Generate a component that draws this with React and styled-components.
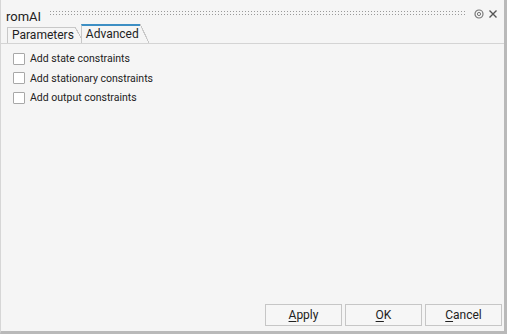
import React, { useState } from 'react';
import styled, { createGlobalStyle } from 'styled-components';

const GlobalStyle = createGlobalStyle`
  html, body { margin: 0; padding: 0; background: #f4f4f4; }
  body { font-family: Roboto, "Liberation Sans", sans-serif; }
`;

const Dialog = styled.div`
  width: 507px;
  height: 334px;
  box-sizing: border-box;
  display: flex;
  flex-direction: column;
  background: #f5f5f5;
  border-right: 3px solid #b9b9b9;
  border-bottom: 3px solid #b9b9b9;
  border-left: 1px solid #d6d6d6;
`;

const TitleBar = styled.div`
  height: 24px;
  box-sizing: border-box;
  display: flex;
  align-items: center;
  padding: 4px 6px 0 5px;
  gap: 8px;
`;

const Title = styled.span`
  font-size: 13px;
  color: #222;
  margin-top: 4px;
`;

const Grip = styled.div`
  flex: 1;
  height: 5px;
  margin-top: -3px;
  background-image: radial-gradient(circle, #9a9a9a 0.8px, transparent 1px);
  background-size: 3px 3px;
`;

const TitleIcons = styled.div`
  display: flex;
  align-items: center;
  gap: 4px;
`;

const TabBar = styled.div`
  display: flex;
  align-items: flex-end;
  padding-left: 6px;
  height: 19px;
  border-bottom: 1px solid #d4d4d4;
`;

const Tab = styled.div`
  position: relative;
  height: ${p => (p.$active ? '19px' : '16px')};
  box-sizing: border-box;
  padding: 0 1px 0 4px;
  margin-right: ${p => (p.$active ? '10px' : '6px')};
  font-size: 12px;
  line-height: ${p => (p.$active ? '17px' : '15px')};
  color: #222;
  background: #f5f5f5;
  border-left: 1px solid #c8c8c8;
  border-top: ${p => (p.$active ? '2px solid #3d8fc4' : '1px solid #c8c8c8')};
  z-index: ${p => (p.$active ? 2 : 1)};

  &::after {
    content: '';
    position: absolute;
    top: ${p => (p.$active ? '-2px' : '-1px')};
    right: -9px;
    width: 9px;
    bottom: 0;
    background: linear-gradient(
      to top right,
      #f5f5f5 calc(50% - 0.6px),
      #c8c8c8 calc(50% - 0.5px),
      #c8c8c8 calc(50% + 0.5px),
      transparent calc(50% + 0.6px)
    );
  }
`;

const Content = styled.div`
  flex: 1;
  display: flex;
  flex-direction: column;
  padding: 8px 0 0 12px;
  gap: 6px;
`;

const CheckRow = styled.label`
  display: flex;
  align-items: center;
  gap: 5px;
  font-size: 10.5px;
  color: #222;
  height: 13.5px;
  cursor: default;
`;

const Box = styled.span`
  width: 10px;
  height: 10px;
  border: 1px solid #a8a8a8;
  background: #fff;
  border-radius: 1px;
  display: inline-flex;
  align-items: center;
  justify-content: center;
`;

const Footer = styled.div`
  display: flex;
  justify-content: flex-end;
  gap: 3px;
  padding: 0 2px 5px 0;
`;

const Button = styled.button`
  width: 77px;
  height: 22px;
  box-sizing: border-box;
  border: 1px solid #c6c6c6;
  background: #f6f6f6;
  font-family: Roboto, "Liberation Sans", sans-serif;
  font-size: 12px;
  color: #222;
  padding: 0;

  u { text-decoration: underline; text-underline-offset: 2px; }
`;

const CheckItem = ({ label }) => {
  const [on, setOn] = useState(false);
  return (
    <CheckRow onClick={() => setOn(!on)}>
      <Box>
        {on && (
          <svg width="8" height="8" viewBox="0 0 8 8">
            <path d="M1 4l2 2 4-5" stroke="#333" strokeWidth="1.3" fill="none" />
          </svg>
        )}
      </Box>
      {label}
    </CheckRow>
  );
};

export default function App() {
  return (
    <>
      <GlobalStyle />
      <Dialog>
        <TitleBar>
          <Title>romAI</Title>
          <Grip />
          <TitleIcons>
            <svg width="10" height="10" viewBox="0 0 10 10">
              <circle cx="5" cy="5" r="4" fill="none" stroke="#777" strokeWidth="1.2" />
              <circle cx="5" cy="5" r="1.6" fill="none" stroke="#777" strokeWidth="1" />
            </svg>
            <svg width="10" height="10" viewBox="0 0 10 10">
              <path d="M1.5 1.5l7 7M8.5 1.5l-7 7" stroke="#555" strokeWidth="1.4" />
            </svg>
          </TitleIcons>
        </TitleBar>
        <TabBar>
          <Tab>Parameters</Tab>
          <Tab $active>Advanced</Tab>
        </TabBar>
        <Content>
          <CheckItem label="Add state constraints" />
          <CheckItem label="Add stationary constraints" />
          <CheckItem label="Add output constraints" />
        </Content>
        <Footer>
          <Button><u>A</u>pply</Button>
          <Button><u>O</u>K</Button>
          <Button><u>C</u>ancel</Button>
        </Footer>
      </Dialog>
    </>
  );
}
